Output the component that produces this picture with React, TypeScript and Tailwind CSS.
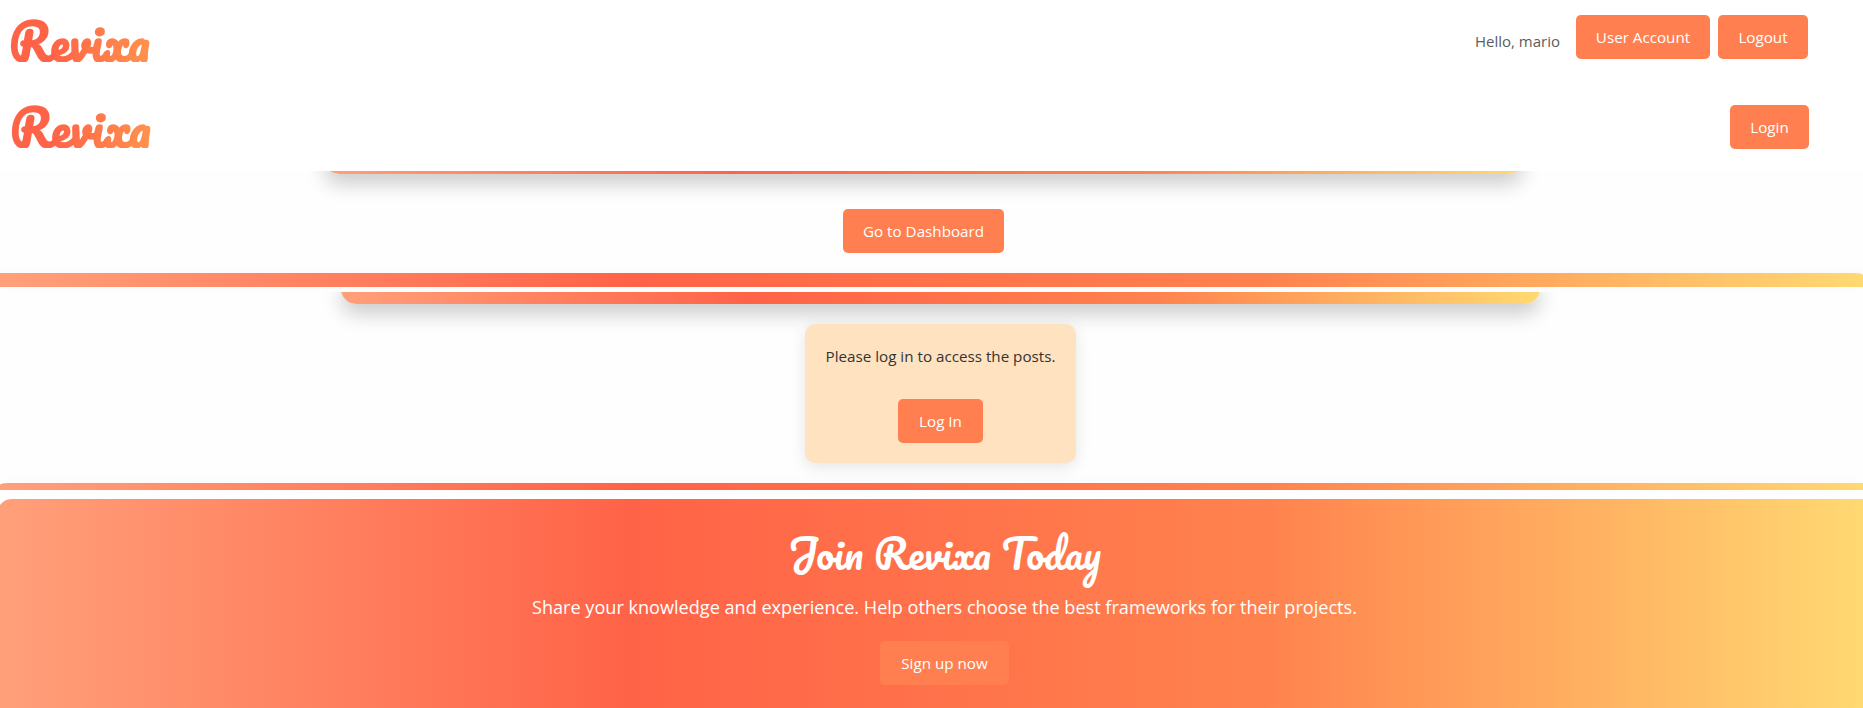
import type { ReactNode } from 'react';

const gradient =
  'bg-[linear-gradient(90deg,#ffa07a_0%,#ff6347_34%,#ff824e_68%,#ffd972_100%)]';

function Button({ children, className = '' }: { children: ReactNode; className?: string }) {
  return (
    <button
      className={`flex h-11 shrink-0 items-center justify-center whitespace-nowrap rounded-[5px] bg-[#ff7f50] text-white ${className}`}
    >
      {children}
    </button>
  );
}

function Logo() {
  return (
    <span className="h-[47px] shrink-0 whitespace-nowrap bg-[linear-gradient(90deg,#ff6347_30%,#ff924d_100%)] bg-clip-text font-['Pacifico',cursive] text-[48px] font-bold leading-[53px] text-transparent">
      Revixa
    </span>
  );
}

export default function App() {
  return (
    <div className="flex h-[708px] w-full flex-col overflow-hidden bg-white font-['Segoe_UI','Open_Sans',sans-serif] text-[15.2px] leading-6">
      <header className="flex h-[86px] shrink-0 items-start justify-between pl-[9px] pr-[55px] pt-[15px]">
        <Logo />
        <div className="flex items-start">
          <span className="mr-[17px] mt-[14px] w-[84px] whitespace-nowrap text-[15px] text-[#5c5c5c]">Hello, mario</span>
          <Button className="mr-2 w-[134px]">User Account</Button>
          <Button className="w-[90px]">Logout</Button>
        </div>
      </header>
      <header className="flex h-[85px] shrink-0 items-start justify-between pl-[10px] pr-[54px] pt-[15px]">
        <Logo />
        <Button className="mt-[4px] w-[79px]">Login</Button>
      </header>

      <section className="flex h-[102px] shrink-0 flex-col items-start overflow-hidden bg-[#fefefe]">
        <div className={`-mt-[27px] ml-[324px] h-[30px] w-[1199px] shrink-0 rounded-[15px] shadow-[0_10px_20px_rgba(0,0,0,0.2)] ${gradient}`} />
        <Button className="ml-[843px] mt-[35px] w-[161px]">Go to Dashboard</Button>
      </section>
      <div className={`h-[14px] shrink-0 shadow-[0_0_14px_rgba(0,0,0,0.03)] [border-top-right-radius:8px_2px] ${gradient}`} />

      <section className="mt-[5px] flex h-[191px] shrink-0 flex-col items-start overflow-hidden bg-[#fefefe]">
        <div className={`-mt-[18px] ml-[341px] h-[30px] w-[1199px] shrink-0 rounded-[15px] shadow-[0_10px_20px_rgba(0,0,0,0.2)] ${gradient}`} />
        <div className="relative ml-[805px] mt-5 flex h-[139px] w-[271px] shrink-0 flex-col items-center rounded-[10px] bg-[#ffe2c0] pt-5 shadow-[0_4px_16px_rgba(0,0,0,0.1)]">
          <p className="whitespace-nowrap text-[#333]">Please log in to access the posts.</p>
          <Button className="mt-[31px] w-[85px]">Log In</Button>
        </div>
      </section>
      <div className={`h-[7px] shrink-0 shadow-[0_0_14px_rgba(0,0,0,0.03)] [border-top-left-radius:8px_2px] ${gradient}`} />

      <section className={`-ml-[3px] mt-[9px] flex h-[209px] shrink-0 flex-col items-center rounded-tl-[15px] pl-[29px] ${gradient}`}>
        <h2 className="mt-[24px] whitespace-nowrap font-['Pacifico',cursive] text-[40px] font-normal leading-[60px] text-white">
          Join Revixa Today
        </h2>
        <p className="mt-[9px] whitespace-nowrap text-[18.1px] leading-[30px] text-white">
          Share your knowledge and experience. Help others choose the best frameworks for their projects.
        </p>
        <Button className="mt-[19px] w-[129px]">Sign up now</Button>
      </section>
    </div>
  );
}
